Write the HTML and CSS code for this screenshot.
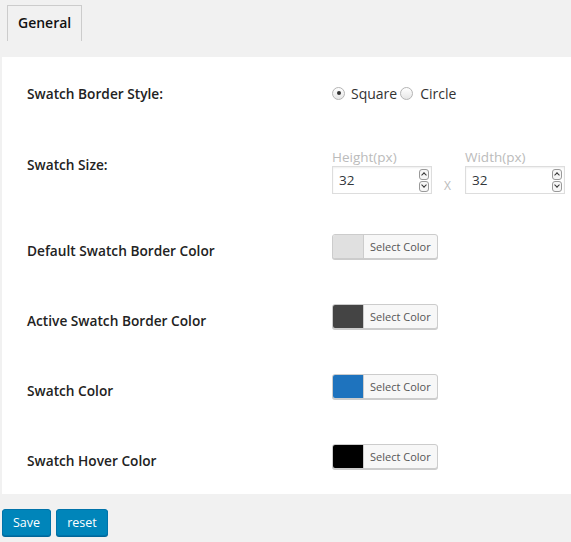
FILE: index.html
```html
<!DOCTYPE html>
<html>
<head>
<meta charset="utf-8">
<link rel="stylesheet" href="styles.css">
</head>
<body>
<div class="tabs">
  <div class="tab">General</div>
</div>
<div class="panel">
  <div class="row row-style">
    <div class="label">Swatch Border Style:</div>
    <div class="control radios">
      <label class="radio"><span class="dot checked"></span>Square</label>
      <label class="radio"><span class="dot"></span>Circle</label>
    </div>
  </div>
  <div class="row row-size">
    <div class="label">Swatch Size:</div>
    <div class="control sizes">
      <div class="field">
        <div class="hint">Height(px)</div>
        <div class="num"><span>32</span><span class="spin"><i class="up"></i><i class="down"></i></span></div>
      </div>
      <div class="times">X</div>
      <div class="field">
        <div class="hint">Width(px)</div>
        <div class="num"><span>32</span><span class="spin"><i class="up"></i><i class="down"></i></span></div>
      </div>
    </div>
  </div>
  <div class="row row-color">
    <div class="label">Default Swatch Border Color</div>
    <div class="control"><div class="picker"><span class="sw sw-light"></span><span class="pick-text">Select Color</span></div></div>
  </div>
  <div class="row row-color">
    <div class="label">Active Swatch Border Color</div>
    <div class="control"><div class="picker"><span class="sw sw-dark"></span><span class="pick-text">Select Color</span></div></div>
  </div>
  <div class="row row-color">
    <div class="label">Swatch Color</div>
    <div class="control"><div class="picker"><span class="sw sw-blue"></span><span class="pick-text">Select Color</span></div></div>
  </div>
  <div class="row row-color last">
    <div class="label">Swatch Hover Color</div>
    <div class="control"><div class="picker"><span class="sw sw-black"></span><span class="pick-text">Select Color</span></div></div>
  </div>
</div>
<div class="actions">
  <button class="btn">Save</button>
  <button class="btn">reset</button>
</div>
</body>
</html>
```
FILE: styles.css
```css
html, body {
  margin: 0;
  padding: 0;
  background: #f1f1f1;
  font-family: "Open Sans", "Liberation Sans", sans-serif;
  color: #23282d;
}
body {
  width: 571px;
  height: 542px;
  overflow: hidden;
}
.tabs {
  padding: 5px 0 0 7px;
  height: 57px;
  box-sizing: border-box;
}
.tab {
  display: inline-block;
  box-sizing: border-box;
  width: 75px;
  height: 36px;
  border: 1px solid #ccc;
  border-bottom: none;
  font-size: 14px;
  font-weight: 600;
  line-height: 34px;
  padding-left: 10px;
  color: #111;
}
.panel {
  background: #fff;
  margin-left: 2px;
  height: 437px;
  box-sizing: border-box;
}
.row {
  display: flex;
  align-items: center;
  padding-left: 25px;
}
.label {
  width: 305px;
  flex: none;
  font-size: 13.7px;
  font-weight: 600;
  color: #222;
}
.row-style { height: 72px; }
.row-size { height: 86px; align-items: flex-start; }
.row-size .label { padding-top: 26px; }
.row-size .control { padding-top: 19px; }
.row-color { height: 70px; }
.row-color .picker { margin-bottom: 7px; }
.radios {
  display: flex;
  align-items: center;
  font-size: 14px;
  color: #333;
}
.radio {
  display: flex;
  align-items: center;
}
.dot {
  width: 13px;
  height: 13px;
  border: 1px solid #b4b4b4;
  border-radius: 50%;
  box-sizing: border-box;
  background: linear-gradient(#fff, #e6e6e6);
  margin-right: 6px;
  position: relative;
}
.radio + .radio .dot { margin-left: 3px; margin-right: 7px; }
.dot.checked::after {
  content: "";
  position: absolute;
  left: 3.5px;
  top: 3.5px;
  width: 4px;
  height: 4px;
  border-radius: 50%;
  background: #333;
}
.sizes {
  display: flex;
  align-items: flex-start;
}
.hint {
  font-size: 13.5px;
  color: #bbb;
  line-height: 18px;
}
.num {
  width: 100px;
  height: 28px;
  box-sizing: border-box;
  border: 1px solid #ddd;
  box-shadow: inset 0 1px 2px rgba(0,0,0,0.07);
  display: flex;
  align-items: center;
  justify-content: space-between;
  padding: 0 2px 0 6px;
  font-size: 13.5px;
  color: #32373c;
  background: #fff;
}
.spin {
  display: flex;
  flex-direction: column;
  gap: 1px;
}
.spin i {
  display: block;
  width: 10px;
  height: 11px;
  border: 1px solid #999;
  border-radius: 3px;
  box-sizing: border-box;
  position: relative;
  background: #f6f6f6;
}
.spin i::after {
  content: "";
  position: absolute;
  left: 2px;
  width: 3px;
  height: 3px;
  border-left: 1px solid #333;
  border-top: 1px solid #333;
}
.spin .up::after { top: 3px; transform: rotate(45deg); }
.spin .down::after { top: 1px; transform: rotate(225deg); }
.times {
  font-size: 12px;
  color: #bbb;
  margin: 29px 12px 0 12px;
  width: 9px;
}
.picker {
  display: flex;
  width: 106px;
  height: 25px;
  box-sizing: border-box;
  border: 1px solid #ccc;
  border-radius: 3px;
  overflow: hidden;
  background: #f7f7f7;
  box-shadow: 0 1px 0 #ccc;
}
.sw {
  width: 30px;
  flex: none;
  border-right: 1px solid #ccc;
}
.sw-light { background: #e0e0e0; }
.sw-dark { background: #444; }
.sw-blue { background: #1e73be; }
.sw-black { background: #000; }
.pick-text {
  font-size: 11px;
  color: #555;
  line-height: 23px;
  padding-left: 6px;
}
.actions {
  display: flex;
  gap: 5px;
  padding: 15px 0 0 2px;
}
.btn {
  height: 27px;
  box-sizing: border-box;
  background: #0085ba;
  border: 1px solid #0073aa;
  border-radius: 3px;
  color: #fff;
  font-family: "Open Sans", "Liberation Sans", sans-serif;
  font-size: 12.5px;
  padding: 0;
  box-shadow: 0 1px 0 #006799;
}
.btn:first-child { width: 49px; }
.btn + .btn { width: 52px; }
```
